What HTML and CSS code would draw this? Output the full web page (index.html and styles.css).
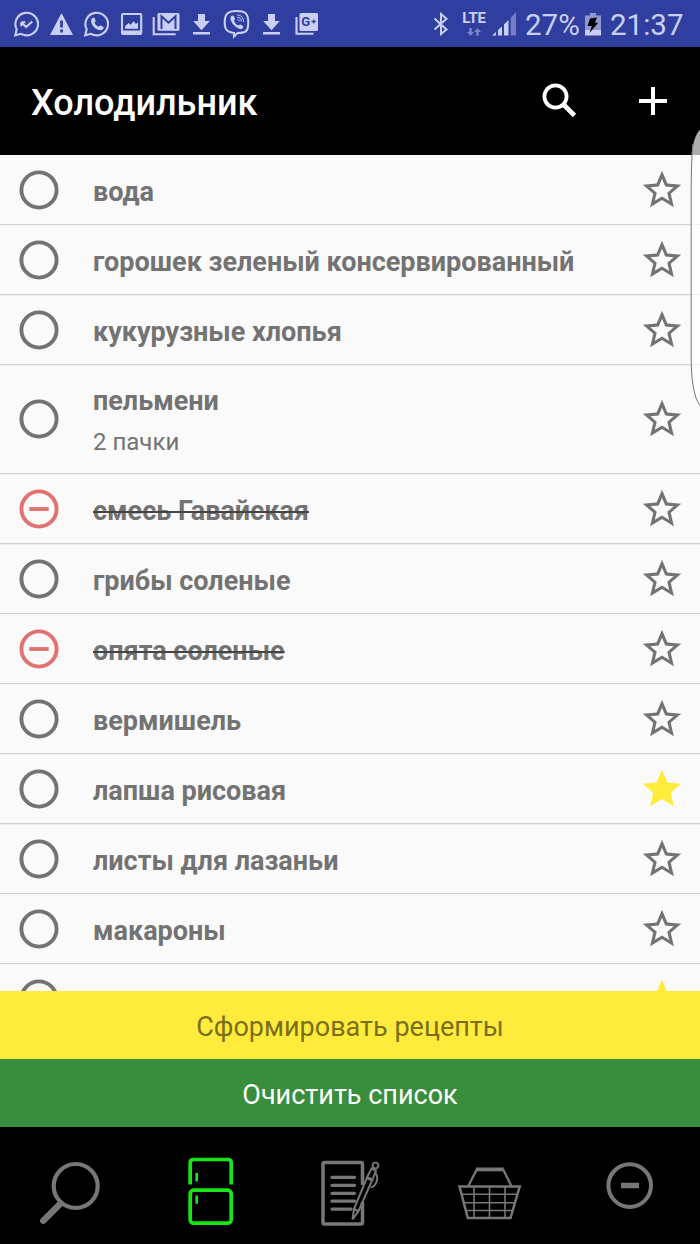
FILE: index.html
```html
<!DOCTYPE html>
<html lang="ru">
<head>
<meta charset="utf-8">
<title>Холодильник</title>
<link rel="stylesheet" href="styles.css">
</head>
<body>
<svg class="symbols" width="0" height="0">
  <symbol id="ring" viewBox="0 0 40 40"><circle cx="20" cy="20" r="17.6" fill="none" stroke="currentColor" stroke-width="3.9"/></symbol>
  <symbol id="ring-minus" viewBox="0 0 40 40"><circle cx="20" cy="20" r="17.6" fill="none" stroke="currentColor" stroke-width="3.9"/><path d="M10.3 20h19.4" stroke="currentColor" stroke-width="3.9"/></symbol>
  <symbol id="star" viewBox="0 0 24 24"><path fill="currentColor" d="M22 9.24l-7.19-.62L12 2 9.19 8.63 2 9.24l5.46 4.73L5.82 21 12 17.27 18.18 21l-1.63-7.03L22 9.24zM12 15.4l-3.76 2.27 1-4.28-3.32-2.88 4.38-.38L12 6.1l1.71 4.04 4.38.38-3.32 2.88 1 4.28L12 15.4z"/></symbol>
  <symbol id="star-full" viewBox="0 0 24 24"><path fill="currentColor" d="M12 17.27L18.18 21l-1.64-7.03L22 9.24l-7.19-.61L12 2 9.19 8.63 2 9.24l5.46 4.73L5.82 21z"/></symbol>
  <symbol id="download" viewBox="0 0 35 47"><path fill="currentColor" d="M14 14h7v7h4.8L17.5 30.3 9.2 21H14zM9 32h17v2.4H9z"/></symbol>
</svg>
<div class="screen">
  <div class="status">
    <div class="notices">
      <svg class="notice" viewBox="0 0 35 47"><path class="line" d="M6.2 35.3l1.5-6A11.3 11.3 0 1 1 12 33.8z"/><path class="line" d="M12.3 22.3v4M12.3 22.3h4M12.7 22.7l4.5 4.3 6-5.5"/></svg>
      <svg class="notice" viewBox="0 0 35 47"><path fill="currentColor" d="M17.5 13L29 35H6z"/><path d="M17.5 20.5v7M17.5 29.5v3" stroke="#303f9f" stroke-width="2.8"/></svg>
      <svg class="notice" viewBox="0 0 35 47"><path class="line" d="M6.2 35.3l1.5-6A11.3 11.3 0 1 1 12 33.8z"/><path fill="currentColor" d="M13.4 18.1c1-.9 2-.6 2.4.5l.8 2c.2.7-.2 1.200-1.100 2.200.8 1.800 2.300 3.200 4.400 4 .9-1.100 1.300-1.600 2-1.300l2.300 1.200c.7.400.5 1.700-.3 2.600-1.300 1.300-3.400 1.200-6-.1-2.500-1.300-4.200-3.400-5.100-5.300-1.100-2.500-.8-4.600.6-5.800z"/></svg>
      <svg class="notice" viewBox="0 0 35 47"><rect class="line" x="8" y="14" width="19.200" height="20" rx="1"/><path fill="currentColor" d="M8 30.500h19V35H8zM11 28.700v-2.500l3.600-3.300 2 1.800 3-3.500 2.300 2.700 2.100-1.300v6.100z"/></svg>
      <svg class="notice" viewBox="0 0 35 47"><path class="line" d="M4.700 17v17.300h22"/><rect x="8.500" y="13" width="22" height="17.800" rx="1.500" fill="currentColor"/><path d="M12.500 29V16.200l7 6.500 7-6.500V29" fill="none" stroke="#303f9f" stroke-width="2"/></svg>
      <svg class="notice"><use href="#download"/></svg>
      <svg class="notice" viewBox="0 0 35 47"><path class="line" d="M17.500 11c8.500 0 11.800 2 11.800 11.500S26 33 18.500 33L15 36.500V33C8 32 5.700 30 5.700 22S9 11 17.500 11z"/><path fill="currentColor" d="M12.700 15.800c1.100-.8 1.800-.2 2.900 1.700.8 1.300.6 1.800-.6 2.700.7 2.700 2 4.300 4.500 5.400 1-1.300 1.600-1.400 2.900-.6 1.800 1.200 2.400 1.800 1.500 3-1.300 1.600-2.600 1.500-5.300 0-3.800-2.300-6-5.200-7-8.600-.4-1.600-.1-2.800 1.100-3.600z"/><path d="M18 15c4 0 6.500 2.500 6.500 6.800M18.200 17.300c2.700 0 4.200 1.500 4.200 4.200M18.500 19.500c1.200 0 1.700.7 1.800 1.800" fill="none" stroke="currentColor" stroke-width="1"/></svg>
      <svg class="notice"><use href="#download"/></svg>
      <svg class="notice" viewBox="0 0 35 47"><path class="line" d="M7.500 17v16.800h17"/><rect x="10.500" y="13" width="18.500" height="18" rx="1.500" fill="currentColor"/><text x="12.300" y="26.300" class="gplus">G</text><path d="M22.600 21.500h4.200M24.700 19.400v4.200" stroke="#303f9f" stroke-width="1.300"/></svg>
    </div>
    <div class="system">
      <svg class="bluetooth" viewBox="0 0 18 24"><path d="M2.500 6.500l12 11L9 22V2l5.500 4.800-12 10.700" fill="none" stroke="currentColor" stroke-width="2"/></svg>
      <div class="network"><span class="lte">LTE</span><svg class="arrows" viewBox="0 0 14 8"><path fill="currentColor" d="M2.300 0h2.400v4H7L3.500 7.700 0 4h2.300zM9.300 7.700V4H7l3.500-4L14 4h-2.300v3.700z"/></svg></div>
      <svg class="signal" viewBox="0 0 25 24"><path fill="currentColor" d="M0 23.500L4 20v3.500zM6 18l4-3.500v9H6zM12 12.500L16.500 8v15.500H12z"/><path fill="currentColor" opacity=".45" d="M18.700 6L24 0v23.500h-5.300z"/></svg>
      <span class="percent">27%</span>
      <svg class="battery" viewBox="0 0 16 24"><path fill="#8f98d3" d="M5 1h6v2.500h5V19H0V3.500h5z"/><path fill="currentColor" d="M0 18h16v5.500H0z"/><path fill="#000" d="M5 6.500l7-1-2 5 3 .5L4.500 21l2.300-7H2.500z"/></svg>
      <span class="clock">21:37</span>
    </div>
  </div>
  <header class="header">
    <h1 class="title">Холодильник</h1>
    <svg class="find" viewBox="0 0 36 36"><circle cx="13.500" cy="13.500" r="11.100" fill="none" stroke="currentColor" stroke-width="3.800"/><path d="M21.500 21.500l11 11" stroke="currentColor" stroke-width="4.600"/></svg>
    <svg class="add" viewBox="0 0 28 28"><path d="M14 0v28M0 14h28" stroke="currentColor" stroke-width="4"/></svg>
  </header>
  <main class="list">
    <div class="row"><svg class="mark"><use href="#ring"/></svg><div class="name">вода</div><svg class="star"><use href="#star"/></svg></div>
    <div class="row"><svg class="mark"><use href="#ring"/></svg><div class="name">горошек зеленый консервированный</div><svg class="star"><use href="#star"/></svg></div>
    <div class="row"><svg class="mark"><use href="#ring"/></svg><div class="name">кукурузные хлопья</div><svg class="star"><use href="#star"/></svg></div>
    <div class="row tall"><svg class="mark"><use href="#ring"/></svg><div class="name">пельмени<div class="note">2 пачки</div></div><svg class="star"><use href="#star"/></svg></div>
    <div class="row"><svg class="mark out"><use href="#ring-minus"/></svg><div class="name"><span class="gone">смесь Гавайская</span></div><svg class="star"><use href="#star"/></svg></div>
    <div class="row"><svg class="mark"><use href="#ring"/></svg><div class="name">грибы соленые</div><svg class="star"><use href="#star"/></svg></div>
    <div class="row"><svg class="mark out"><use href="#ring-minus"/></svg><div class="name"><span class="gone">опята соленые</span></div><svg class="star"><use href="#star"/></svg></div>
    <div class="row"><svg class="mark"><use href="#ring"/></svg><div class="name">вермишель</div><svg class="star"><use href="#star"/></svg></div>
    <div class="row"><svg class="mark"><use href="#ring"/></svg><div class="name">лапша рисовая</div><svg class="star fav"><use href="#star-full"/></svg></div>
    <div class="row"><svg class="mark"><use href="#ring"/></svg><div class="name">листы для лазаньи</div><svg class="star"><use href="#star"/></svg></div>
    <div class="row"><svg class="mark"><use href="#ring"/></svg><div class="name">макароны</div><svg class="star"><use href="#star"/></svg></div>
    <div class="row"><svg class="mark"><use href="#ring"/></svg><div class="name"></div><svg class="star fav"><use href="#star-full"/></svg></div>
  </main>
  <div class="action recipes">Сформировать рецепты</div>
  <div class="action clear">Очистить список</div>
  <nav class="tabs">
    <svg class="tab" viewBox="0 0 140 117"><circle cx="75.700" cy="59" r="22" stroke-width="4.200"/><path d="M60.500 76.500L43.300 93.700" stroke-width="6.500" stroke-linecap="round"/></svg>
    <svg class="tab active" viewBox="140 0 140 117"><path d="M190.200 57.500V36q0-3.500 3.500-3.500h34q3.500 0 3.500 3.500v21.500" stroke-width="3.700"/><rect x="190.200" y="63.200" width="41" height="33" rx="3.500" stroke-width="3.700"/><path d="M196.700 46v8.500M196.700 68.500v8.200" stroke-width="2.600"/></svg>
    <svg class="tab" viewBox="280 0 140 117"><path d="M362.500 58V37q0-1.500-1.500-1.500h-36.500q-1.500 0-1.500 1.500v58.500q0 1.500 1.500 1.500H361q1.500 0 1.500-1.500V75" stroke-width="3.500"/><path d="M332 50.300h22.500M332 58.300h22.500M332 66.300h22.500M332 74.200h22.500M332 82.200h19" stroke-width="3.300" stroke-linecap="round"/><circle cx="375.500" cy="38.500" r="2.900" stroke-width="1.800"/><path d="M371.500 41.500l4.500 2-3.500 9-5.500-2.300zM366.800 51.200l5.200 2.300-13.500 30.700-4.500-2.200zM354 82l-1.500 10.500 6-8.300M375.500 46c3.500 5 1.500 12-4.500 14.500" stroke-width="2"/></svg>
    <svg class="tab" viewBox="420 0 140 117"><path d="M468.300 59l8.700-17M503 42l8.300 17" stroke-width="2.300"/><path d="M476 42.400h27.700" stroke-width="3.800"/><path d="M459.500 59.600h60.200L510.500 91h-42.700z" stroke-width="2.500"/><path d="M461 67.200h56.500M463.500 75.700h51.500M466 83.500h46.500M474 60v31M489.500 60v31M505 60v31" stroke-width="1.600"/></svg>
    <svg class="tab" viewBox="560 0 140 117"><circle cx="629.700" cy="58.600" r="21.300" stroke-width="4"/><path d="M621 58.500h18" stroke-width="5.500"/></svg>
  </nav>
  <svg class="edge" viewBox="0 0 12 284"><path d="M12 2Q3 8 1.500 32V240Q2 275 12 282" fill="#fff" fill-opacity=".68"/><path d="M2.800 18Q1.500 30 1.200 60V236Q2 273 12 281.500" fill="none" stroke="#777"/></svg>
</div>
</body>
</html>
```

FILE: styles.css
```css
* { box-sizing: border-box; }
body { margin: 0; font-family: Roboto, sans-serif; background: #000; }
svg { display: block; flex: none; }
.symbols { position: absolute; }
.screen { position: relative; width: 700px; height: 1244px; display: flex; flex-direction: column; overflow: hidden; }

.status { height: 47px; flex: none; display: flex; justify-content: space-between; background: #303f9f; color: #c9cff4; }
.notices { display: flex; padding-left: 9px; }
.notice { width: 35px; height: 47px; }
.line { fill: none; stroke: currentColor; stroke-width: 2.1; }
.gplus { font: 700 13px Roboto, sans-serif; fill: #303f9f; }
.system { display: flex; align-items: center; padding-right: 17px; }
.bluetooth { width: 18px; height: 24px; margin-right: 11px; }
.network { width: 26px; height: 25px; margin-right: 5px; display: flex; flex-direction: column; align-items: center; gap: 2px; }
.lte { font-size: 15px; font-weight: 700; line-height: 15px; letter-spacing: -.3px; }
.arrows { width: 14px; height: 8px; opacity: .5; }
.signal { width: 25px; height: 24px; margin-right: 8px; }
.percent, .clock { font-size: 29.5px; line-height: 47px; padding-top: 3px; }
.percent { width: 60px; }
.battery { width: 16px; height: 24px; margin-right: 9px; }
.clock { width: 73px; }

.header { height: 108px; flex: none; display: flex; align-items: center; padding: 0 33px 0 31px; background: #000; color: #fff; }
.title { margin: 4px auto 0 0; font-size: 36px; font-weight: 500; }
.find { width: 36px; height: 36px; margin-right: 61px; }
.add { width: 28px; height: 28px; }

.list { height: 836px; flex: none; overflow: hidden; background: #fafafa; color: #737373; }
.row { height: 70px; display: flex; align-items: center; padding: 0 16px 0 19px; border-bottom: 1px solid #d3d3d3; box-shadow: 0 1px #eee; }
.tall { height: 109px; }
.mark { width: 40px; height: 40px; }
.out { color: #e27272; }
.name { flex: 1; padding: 4px 0 0 34px; font-size: 27px; font-weight: 700; line-height: 32px; white-space: nowrap; }
.note { margin-top: 9px; font-size: 24px; font-weight: 400; }
.gone { text-decoration: line-through #444 1.5px; }
.star { width: 46px; height: 46px; margin-right: -.5px; }
.fav { color: #ffeb3b; }

.action { height: 68px; flex: none; display: flex; align-items: center; justify-content: center; padding-top: 3px; font-size: 27px; }
.recipes { background: #ffeb3b; color: #796f1c; }
.clear { background: #388e3c; color: #fff; }

.tabs { display: flex; height: 117px; background: #000; color: #777; }
.tab { width: 140px; height: 117px; fill: none; stroke: currentColor; }
.active { color: #16e616; }

.edge { position: absolute; left: 690px; top: 126px; width: 12px; height: 284px; }
```
